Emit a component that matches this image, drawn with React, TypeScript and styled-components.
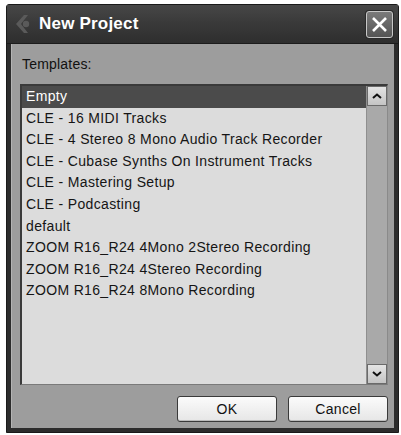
import { FC } from 'react'
import styled, { createGlobalStyle } from 'styled-components'

const GlobalStyle = createGlobalStyle`
  html, body {
    margin: 0;
    padding: 0;
    background: #fff;
  }
  body {
    font-family: 'Liberation Sans', Arial, sans-serif;
  }
`

const Window = styled.div`
  margin: 4px 2px 0 6px;
  width: 393px;
  height: 429px;
  box-sizing: border-box;
  display: flex;
  flex-direction: column;
  background: #2c2c2c;
  border: 1px solid #1a1a1a;
  border-radius: 3px 3px 0 0;
`

const TitleBar = styled.div`
  height: 38px;
  flex-shrink: 0;
  display: flex;
  align-items: center;
  padding: 0 5px 0 8px;
  background: linear-gradient(#474747 0%, #3a3a3a 45%, #2e2e2e 100%);
  border-bottom: 1px solid #1c1c1c;
`

const Title = styled.div`
  flex: 1;
  margin-left: 7px;
  color: #fff;
  font-weight: bold;
  font-size: 17px;
  letter-spacing: 0.2px;
`

const CloseButton = styled.div`
  width: 25px;
  height: 25px;
  display: flex;
  align-items: center;
  justify-content: center;
  border: 1px solid #c8c8c8;
  border-radius: 3px;
  background: linear-gradient(#7a7a7a, #555);
  box-shadow: 0 0 0 1px #2a2a2a;
`

const Body = styled.div`
  flex: 1;
  margin: 0 4px 4px 4px;
  background: #9d9d9d;
  border-left: 1px solid #b4b4b4;
  display: flex;
  flex-direction: column;
  padding: 12px 6px 0 8px;
`

const Label = styled.div`
  font-size: 14px;
  color: #111;
  margin-left: 2px;
  height: 28px;
  letter-spacing: 0.2px;
`

const ListBox = styled.div`
  height: 298px;
  display: flex;
  background: #dcdcdc;
  border-top: 2px solid #3a3a3a;
  border-left: 2px solid #3a3a3a;
  border-bottom: 1px solid #7a7a7a;
  border-right: 1px solid #8a8a8a;
`

const Rows = styled.div`
  flex: 1;
  display: flex;
  flex-direction: column;
`

const Row = styled.div<{ $selected?: boolean }>`
  height: 21.6px;
  line-height: 21.6px;
  padding-left: 4px;
  font-size: 14px;
  letter-spacing: 0.35px;
  white-space: nowrap;
  color: ${({ $selected }) => ($selected ? '#fff' : '#151515')};
  background: ${({ $selected }) => ($selected ? '#4b4b4b' : 'transparent')};
`

const ScrollBar = styled.div`
  width: 20px;
  display: flex;
  flex-direction: column;
  justify-content: space-between;
  background: #a9a9a9;
  border-left: 1px solid #8f8f8f;
`

const ArrowButton = styled.div`
  height: 20px;
  display: flex;
  align-items: center;
  justify-content: center;
  background: linear-gradient(#e4e4e4, #c4c4c4);
  border: 1px solid #6a6a6a;
  box-sizing: border-box;
`

const Footer = styled.div`
  display: flex;
  justify-content: flex-end;
  gap: 11px;
  padding-top: 11px;
`

const Button = styled.div`
  width: 100px;
  height: 26px;
  box-sizing: border-box;
  display: flex;
  align-items: center;
  justify-content: center;
  font-size: 14px;
  letter-spacing: 0.3px;
  color: #111;
  background: linear-gradient(#fbfbfb, #e6e6e6);
  border: 1px solid #3a3a3a;
  border-radius: 3px;
  box-shadow: inset 0 -1px 0 #bdbdbd;
`

const Logo: FC = () => (
  <svg width="17" height="20" viewBox="0 0 17 20">
    <path d="M9 1 L1 10 L9 19 L13 19 L6 10 L13 1 Z" fill="#5a5a5a" />
    <circle cx="11" cy="10" r="3.2" fill="#5a5a5a" />
  </svg>
)

const items = [
  'Empty',
  'CLE - 16 MIDI Tracks',
  'CLE - 4 Stereo 8 Mono Audio Track Recorder',
  'CLE - Cubase Synths On Instrument Tracks',
  'CLE - Mastering Setup',
  'CLE - Podcasting',
  'default',
  'ZOOM R16_R24 4Mono 2Stereo Recording',
  'ZOOM R16_R24 4Stereo Recording',
  'ZOOM R16_R24 8Mono Recording',
]

const App: FC = () => {
  return (
    <>
      <GlobalStyle />
      <Window>
        <TitleBar>
          <Logo />
          <Title>New Project</Title>
          <CloseButton>
            <svg width="17" height="17" viewBox="0 0 17 17">
              <path d="M2 2 L15 15 M15 2 L2 15" stroke="#fff" strokeWidth="2.6" />
            </svg>
          </CloseButton>
        </TitleBar>
        <Body>
          <Label>Templates:</Label>
          <ListBox>
            <Rows>
              {items.map((item, i) => (
                <Row key={item} $selected={i === 0}>
                  {item}
                </Row>
              ))}
            </Rows>
            <ScrollBar>
              <ArrowButton>
                <svg width="10" height="6" viewBox="0 0 10 6">
                  <path d="M1 5 L5 1.5 L9 5" stroke="#111" strokeWidth="2" fill="none" />
                </svg>
              </ArrowButton>
              <ArrowButton>
                <svg width="10" height="6" viewBox="0 0 10 6">
                  <path d="M1 1 L5 4.5 L9 1" stroke="#111" strokeWidth="2" fill="none" />
                </svg>
              </ArrowButton>
            </ScrollBar>
          </ListBox>
          <Footer>
            <Button>OK</Button>
            <Button>Cancel</Button>
          </Footer>
        </Body>
      </Window>
    </>
  )
}

export default App
